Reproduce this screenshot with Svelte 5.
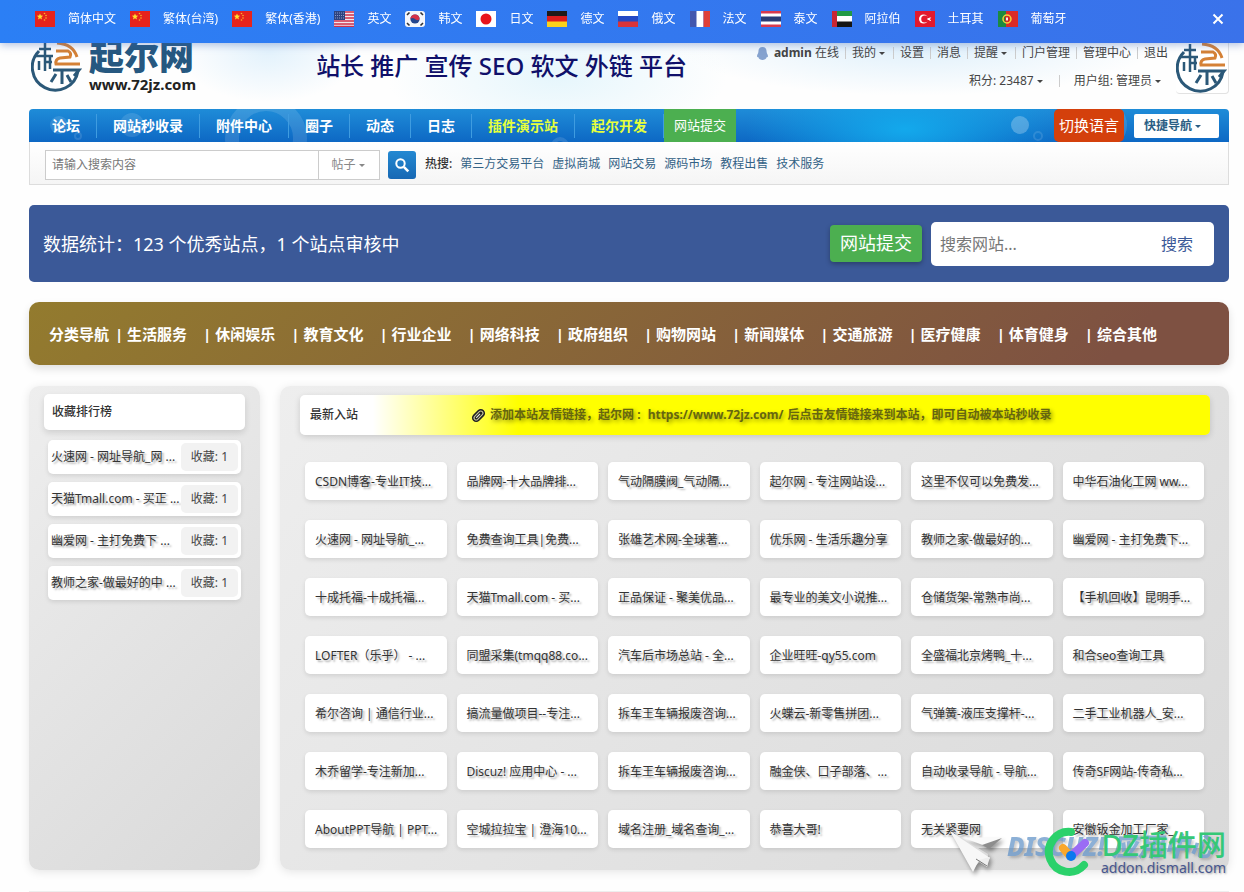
<script>
  const languages = [
    { code: 'cn', label: '简体中文' },
    { code: 'cn', label: '繁体(台湾)' },
    { code: 'cn', label: '繁体(香港)' },
    { code: 'us', label: '英文' },
    { code: 'kr', label: '韩文' },
    { code: 'jp', label: '日文' },
    { code: 'de', label: '德文' },
    { code: 'ru', label: '俄文' },
    { code: 'fr', label: '法文' },
    { code: 'th', label: '泰文' },
    { code: 'ae', label: '阿拉伯' },
    { code: 'tr', label: '土耳其' },
    { code: 'pt', label: '葡萄牙' }
  ];

  const userLinks = [
    { label: '我的', menu: true },
    { label: '设置' },
    { label: '消息' },
    { label: '提醒', menu: true },
    { label: '门户管理' },
    { label: '管理中心' },
    { label: '退出' }
  ];

  const navItems = [
    { label: '论坛' },
    { label: '网站秒收录' },
    { label: '附件中心' },
    { label: '圈子' },
    { label: '动态' },
    { label: '日志' },
    { label: '插件演示站', hot: true },
    { label: '起尔开发', hot: true }
  ];

  const hotWords = ['第三方交易平台', '虚拟商城', '网站交易', '源码市场', '教程出售', '技术服务'];

  const categories = [
    '生活服务', '休闲娱乐', '教育文化', '行业企业', '网络科技', '政府组织',
    '购物网站', '新闻媒体', '交通旅游', '医疗健康', '体育健身', '综合其他'
  ];

  const ranking = [
    { title: '火速网 - 网址导航_网 ...', count: 1 },
    { title: '天猫Tmall.com - 买正 ...', count: 1 },
    { title: '幽爱网 - 主打免费下 ...', count: 1 },
    { title: '教师之家-做最好的中 ...', count: 1 }
  ];

  const sites = [
    'CSDN博客-专业IT技...', '品牌网-十大品牌排...', '气动隔膜阀_气动隔...',
    '起尔网 - 专注网站设...', '这里不仅可以免费发...', '中华石油化工网 ww...',
    '火速网 - 网址导航_...', '免费查询工具|免费...', '张雄艺术网-全球著...',
    '优乐网 - 生活乐趣分享', '教师之家-做最好的...', '幽爱网 - 主打免费下...',
    '十成托福-十成托福...', '天猫Tmall.com - 买...', '正品保证 - 聚美优品...',
    '最专业的美文小说推...', '仓储货架-常熟市尚...', '【手机回收】昆明手...',
    'LOFTER（乐乎） - ...', '同盟采集(tmqq88.co...', '汽车后市场总站 - 全...',
    '企业旺旺-qy55.com', '全盛福北京烤鸭_十...', '和合seo查询工具',
    '希尔咨询 | 通信行业...', '搞流量做项目--专注...', '拆车王车辆报废咨询...',
    '火蝶云-新零售拼团...', '气弹簧-液压支撑杆-...', '二手工业机器人_安...',
    '木乔留学-专注新加...', 'Discuz! 应用中心 - ...', '拆车王车辆报废咨询...',
    '融金侠、口子部落、...', '自动收录导航 - 导航...', '传奇SF网站-传奇私...',
    'AboutPPT导航 | PPT...', '空城拉拉宝 | 澄海10...', '域名注册_域名查询_...',
    '恭喜大哥!', '无关紧要网', '安徽钣金加工厂家_'
  ];

  let showLanguages = $state(true);
  let keyword = $state('');
  let siteKeyword = $state('');
</script>

{#snippet flag(code)}
  <svg class="flag" viewBox="0 0 20 16" aria-hidden="true">
    {#if code === 'cn'}
      <rect width="20" height="16" fill="#e6231c" />
      <path d="M5 2.5l.9 2.1 2.2.2-1.7 1.4.6 2.2L5 7.2 3 8.400l.6-2.200L1.900 4.800l2.200-.2z" fill="#fde02f" />
      <g fill="#f9b52c">
        <circle cx="9.500" cy="2.500" r=".8" />
        <circle cx="11" cy="4.500" r=".8" />
        <circle cx="11" cy="7" r=".8" />
        <circle cx="9.500" cy="9" r=".8" />
      </g>
    {:else if code === 'us'}
      <rect width="20" height="16" fill="#f3e6ec" />
      <path d="M0 1h20M0 4h20M0 7h20M0 10h20M0 13h20M0 15.500h20" stroke="#d0304a" stroke-width="1.400" />
      <rect width="11" height="9" fill="#2d437f" />
      <path d="M1 2h9M1 4.500h9M1 7h9" stroke="#8d9cc6" stroke-dasharray="1 1" />
    {:else if code === 'kr'}
      <rect width="20" height="16" rx="3" fill="#f4f6fb" />
      <circle cx="10" cy="8" r="4.600" fill="#24478f" />
      <path d="M5.400 8a4.600 4.600 0 0 1 9.200 0c-2 2-3 1-4.600 0s-3-1.500-4.600 0z" fill="#d4314a" />
      <path d="M2 4l2.500-2.500M15.500 1.500L18 4M2 12l2.500 2.500M15.500 14.500L18 12" stroke="#333" stroke-width="1.600" />
    {:else if code === 'jp'}
      <rect width="20" height="16" fill="#fff" />
      <circle cx="10" cy="8" r="5.500" fill="#e8141c" />
    {:else if code === 'de'}
      <rect width="20" height="5.500" fill="#1d1a1a" />
      <rect y="5" width="20" height="6" fill="#dc1d1d" />
      <rect y="10.500" width="20" height="5.500" fill="#fbd21b" />
    {:else if code === 'ru'}
      <rect width="20" height="5.500" fill="#fff" />
      <rect y="5" width="20" height="6" fill="#2349c4" />
      <rect y="10.500" width="20" height="5.500" fill="#d8343a" />
    {:else if code === 'fr'}
      <rect width="7" height="16" fill="#4257ae" />
      <rect x="6.500" width="7" height="16" fill="#fff" />
      <rect x="13.500" width="6.500" height="16" fill="#df4038" />
    {:else if code === 'th'}
      <rect width="20" height="16" fill="#d83a4c" />
      <rect y="2.500" width="20" height="11" fill="#fff" />
      <rect y="5.500" width="20" height="5" fill="#293c74" />
    {:else if code === 'ae'}
      <rect width="20" height="5.500" fill="#229a45" />
      <rect y="5" width="20" height="6" fill="#fff" />
      <rect y="10.500" width="20" height="5.500" fill="#151515" />
      <rect width="5" height="16" fill="#c92634" />
    {:else if code === 'tr'}
      <rect width="20" height="16" fill="#e3192c" />
      <circle cx="8.500" cy="8" r="4.500" fill="#fff" />
      <circle cx="9.800" cy="8" r="3.600" fill="#e3192c" />
      <path d="M12.500 8l3-1.200-1.200 1.200 1.200 1.500z" fill="#fff" stroke="#fff" />
    {:else}
      <rect width="20" height="16" fill="#dc2b26" />
      <rect width="8" height="16" fill="#1c8a3f" />
      <circle cx="9" cy="8" r="4" fill="none" stroke="#f4d23a" stroke-width="1.500" />
      <rect x="7.500" y="6" width="3" height="4" fill="#f3ece8" stroke="#d4251f" />
    {/if}
  </svg>
{/snippet}

{#snippet emblem()}
  <svg class="emblem" viewBox="0 0 52 52" fill="none" stroke-width="3" aria-hidden="true">
    <g stroke="#2b5878">
      <path d="M8 11A23 23 0 1 0 47 31" />
      <path d="M8 9h12M5 16h17M14 3v28M19 16v13M14 22h7M8 21v9" stroke-width="2.500" />
      <path d="M22 30h26l-5 6M31 31v13M25 34l-5 8M36 35l4 7" />
    </g>
    <g stroke="#d58136">
      <path d="M26 3q16 1 20 14M25 11h12q4 2 2 6l-10 1q-5 1-4 6h24" />
    </g>
  </svg>
{/snippet}

{#if showLanguages}
  <div class="lang-bar">
    {#each languages as lang}
      <a class="lang" href="#lang">
        {@render flag(lang.code)}
        <span>{lang.label}</span>
      </a>
    {/each}
    <button class="close" aria-label="关闭" onclick={() => (showLanguages = false)}>
      <svg viewBox="0 0 12 12" aria-hidden="true">
        <path d="M1.500 1.500l9 9M10.500 1.500l-9 9" stroke="#fff" stroke-width="2" />
      </svg>
    </button>
  </div>
{/if}

<div class="page">
  <header class="header">
    <a class="logo" href="#home">
      {@render emblem()}
      <span class="logo-text">
        <b class="logo-name">起尔网</b>
        <b class="logo-url">www.72jz.com</b>
      </span>
    </a>
    <p class="slogan">站长 推广 宣传 SEO 软文 外链 平台</p>
    <div class="user">
      <div class="user-row">
        <svg class="bell" viewBox="0 0 12 14" aria-hidden="true">
          <path d="M6 0c3 0 4.500 2 4.500 5 0 2 1.500 3 1.500 5 0 1-1 1-1.500 1C10 13 8 14 6 14s-4-1-4.500-3C1 11 0 11 0 10c0-2 1.500-3 1.500-5C1.500 2 3 0 6 0z" fill="#86a3cf" />
        </svg>
        <span><b>admin</b> 在线</span>
        {#each userLinks as link}
          <i class="sep"></i>
          <a href="#user" class:menu={link.menu}>{link.label}</a>
        {/each}
      </div>
      <div class="user-row points">
        <a class="menu" href="#points">积分: 23487</a>
        <i class="sep"></i>
        <a class="menu" href="#group">用户组: 管理员</a>
      </div>
    </div>
    <a class="avatar" href="#me" aria-label="admin">{@render emblem()}</a>
  </header>

  <nav class="nav">
    <svg class="bubbles" viewBox="0 0 1200 33" preserveAspectRatio="xMidYMid slice" aria-hidden="true">
      <g fill="none" stroke="#fff" stroke-opacity=".12">
        <circle cx="237" cy="29" r="34" stroke-width="14" />
        <circle cx="49" cy="27" r="3" stroke-width="2" />
        <circle cx="1009" cy="27" r="4" stroke-width="2" />
        <circle cx="1074" cy="16" r="20" stroke-width="8" />
        <circle cx="531" cy="37" r="7" stroke-width="4" />
      </g>
      <g fill="#fff" fill-opacity=".12">
        <circle cx="30" cy="16" r="9" />
        <circle cx="103" cy="16" r="12" />
      </g>
      <circle cx="991" cy="16" r="9" fill="#fff" fill-opacity=".25" />
    </svg>
    {#each navItems as item}
      <a class="nav-item" class:hot={item.hot} href="#nav">{item.label}</a>
    {/each}
    <a class="nav-submit" href="#submit">网站提交</a>
    <button class="switch" onclick={() => (showLanguages = !showLanguages)}>切换语言</button>
    <button class="quick menu">快捷导航</button>
  </nav>

  <form class="search">
    <div class="search-box">
      <input type="text" aria-label="搜索" placeholder="请输入搜索内容" bind:value={keyword} />
      <button type="button" class="scope menu">帖子</button>
    </div>
    <button type="button" class="search-btn" aria-label="搜索">
      <svg viewBox="0 0 16 16" fill="none" stroke="#fff" aria-hidden="true">
        <circle cx="6.500" cy="6.500" r="4.200" stroke-width="2" />
        <path d="M9.800 9.800l4.500 4.500" stroke-width="2.600" />
      </svg>
    </button>
    <div class="hot-words">
      <strong>热搜:</strong>
      {#each hotWords as word}
        <a href="#hot">{word}</a>
      {/each}
    </div>
  </form>

  <section class="stats">
    <p>数据统计：123 个优秀站点，1 个站点审核中</p>
    <a class="submit" href="#submit">网站提交</a>
    <form class="site-search">
      <input type="text" aria-label="搜索网站" placeholder="搜索网站..." bind:value={siteKeyword} />
      <button type="button">搜索</button>
    </form>
  </section>

  <nav class="categories">
    <span>分类导航&nbsp;</span>
    {#each categories as category}
      <a href="#category">| {category}</a>
    {/each}
  </nav>

  <main class="columns">
    <aside class="panel rank">
      <h2>收藏排行榜</h2>
      <ul>
        {#each ranking as item}
          <li>
            <a href="#site">{item.title}</a>
            <span>收藏: {item.count}</span>
          </li>
        {/each}
      </ul>
    </aside>

    <section class="panel latest">
      <div class="latest-head">
        <h2>最新入站</h2>
        <p class="notice">
          <svg viewBox="0 0 14 14" fill="none" aria-hidden="true">
            <g transform="rotate(45 7 7)">
              <rect x="3" y="0" width="8" height="14" rx="4" fill="#222" />
              <rect x="5" y="2" width="4" height="10" rx="2" stroke="#c8c8a0" />
              <path d="M7 5v5" stroke="#eee" />
            </g>
          </svg>
          <span>添加本站友情链接，起尔网 :</span>
          <span>&nbsp;https://www.72jz.com/</span>
          <span>后点击友情链接来到本站，即可自动被本站秒收录</span>
        </p>
      </div>
      <div class="grid">
        {#each sites as site}
          <a href="#site">{site}</a>
        {/each}
      </div>
    </section>
  </main>
  <div class="foot-line"></div>

  <div class="watermark">
    <svg class="plane" viewBox="0 0 54 42" aria-hidden="true">
      <path d="M0 0l38 23-1 13-8-5-6 7z" fill="#dcdcdc" />
      <path d="M0 0l23 41 6-12 8 2 3-4z" fill="#f7f7f7" />
      <path d="M14 7l38 0-14 9z" fill="#fafafa" />
      <path d="M52 7L39 18l-7-4z" fill="#8d8d8d" />
      <path d="M29 29l11-3-3 10z" fill="#eee" />
      <path d="M26 28l11 7" stroke="#777" />
    </svg>
    <span class="wm-under">DISCUZ! 应用中心</span>
    <svg class="wm-mark" viewBox="0 0 48 52" fill="none" stroke-linecap="round" aria-hidden="true">
      <path d="M27 6A20 20 0 1 0 40 39" stroke="#2bd16b" stroke-width="8" />
      <path d="M19 22l7 8" stroke="#f9a72b" stroke-width="8" />
      <path d="M27 30L41 17" stroke="#9a6cf5" stroke-width="8" />
      <circle cx="27" cy="30" r="5" fill="#0a78ee" />
    </svg>
    <div class="wm-text">
      <b>DZ插件网</b>
      <span>addon.dismall.com</span>
    </div>
  </div>
</div>

<style>
  :global(body) {
    margin: 0;
    background: #fefefe;
    color: #444;
    font: 12px/18px "Noto Sans", "Noto Sans CJK SC", sans-serif;
  }

  a {
    color: inherit;
    text-decoration: none;
  }

  button,
  input {
    box-sizing: border-box;
    margin: 0;
    padding: 0;
    border: 0;
    background: none;
    color: inherit;
    font: inherit;
  }

  h2,
  p,
  ul {
    margin: 0;
    padding: 0;
    font-weight: normal;
  }

  .menu::after {
    content: "";
    display: inline-block;
    margin: 0 2px 0 3px;
    border: 3px solid transparent;
    border-top-color: currentColor;
    border-bottom: 0;
    vertical-align: middle;
  }

  /* language bar */
  .lang-bar {
    position: fixed;
    z-index: 10;
    top: 0;
    left: 0;
    right: 0;
    box-sizing: border-box;
    height: 43px;
    padding: 0 20px 6px 35px;
    display: flex;
    align-items: center;
    gap: 14px;
    background: linear-gradient(90deg, #2b7ff5, #3a72ea);
    box-shadow: 0 2px 8px rgba(60, 100, 180, 0.4);
    color: #fff;
  }

  .lang {
    display: flex;
    align-items: center;
    gap: 13px;
    white-space: nowrap;
  }

  .flag {
    width: 20px;
    height: 16px;
  }

  .close {
    margin-left: auto;
    width: 12px;
    height: 12px;
    display: flex;
    cursor: pointer;
  }

  /* page frame */
  .page {
    position: relative;
    padding: 0 15px 0 29px;
  }

  .header {
    box-sizing: border-box;
    height: 109px;
    padding-top: 40px;
    display: flex;
    align-items: flex-start;
    background:
      radial-gradient(ellipse 90px 50px at 20% 48%, #e3f2fc, transparent),
      radial-gradient(ellipse 170px 70px at 44% 70%, #e6f6fc, transparent),
      radial-gradient(ellipse 240px 50px at 74% 42%, #dff0fb, transparent);
  }

  .emblem {
    width: 52px;
    height: 52px;
  }

  .logo {
    display: flex;
    gap: 6px;
    padding-left: 2px;
  }

  .logo-text {
    display: flex;
    flex-direction: column;
  }

  .logo-name {
    color: #265880;
    font-size: 35px;
    font-weight: 900;
    line-height: 34px;
  }

  .logo-url {
    color: #222;
    font-size: 15px;
    line-height: 20px;
  }

  .slogan {
    margin-left: 120px;
    padding-top: 8px;
    color: #10106a;
    font-size: 24px;
    font-weight: 500;
    line-height: 36px;
    white-space: nowrap;
  }

  .user {
    margin-left: auto;
    padding-top: 4px;
    display: flex;
    flex-direction: column;
    align-items: flex-end;
    gap: 10px;
    white-space: nowrap;
  }

  .user-row {
    display: flex;
    align-items: center;
    gap: 6px;
  }

  .points {
    gap: 14px;
    padding-right: 5px;
  }

  .bell {
    width: 11px;
    height: 13px;
  }

  .sep {
    width: 1px;
    height: 12px;
    background: #ccc;
  }

  .avatar {
    display: flex;
    margin-left: 8px;
    border: 1px solid #e2e2e2;
    border-left: 0;
    border-radius: 4px;
    background: #fff;
  }

  /* main navigation */
  .nav {
    position: relative;
    height: 33px;
    padding: 0 10px 0 7px;
    display: flex;
    align-items: center;
    border-radius: 4px 4px 0 0;
    background:
      radial-gradient(ellipse 160px 60px at 73% 60%, #13a9ec, transparent),
      linear-gradient(#1f8cd8, #0d68c4);
    color: #fff;
    overflow: hidden;
    white-space: nowrap;
  }

  .bubbles {
    position: absolute;
    inset: 0;
    width: 100%;
    height: 100%;
  }

  .nav-item,
  .nav-submit,
  .switch,
  .quick {
    position: relative;
  }

  .nav-item {
    padding: 0 16px;
    border-right: 1px solid #3f9ce0;
    font-size: 14px;
    font-weight: bold;
    line-height: 24px;
  }

  .hot {
    color: #e6ff3c;
  }

  .nav-submit {
    padding: 0 10px;
    background: #4caf50;
    font-size: 13px;
    line-height: 33px;
  }

  .switch {
    margin-left: auto;
    padding: 0 5px;
    border-radius: 5px;
    background: #d4400c;
    font-size: 15px;
    line-height: 33px;
  }

  .quick {
    margin-left: 10px;
    width: 85px;
    height: 24px;
    padding-left: 10px;
    border-radius: 2px;
    background: #fff;
    color: #2a5d84;
    font-weight: bold;
    text-align: left;
  }

  /* forum search */
  .search {
    height: 38px;
    padding: 4px 15px 0;
    display: flex;
    align-items: center;
    border: 1px solid #ddd;
    border-top: 0;
    background: linear-gradient(#fff, #f5f5f5);
    white-space: nowrap;
  }

  .search-box {
    display: flex;
    width: 335px;
    height: 30px;
    box-sizing: border-box;
    border: 1px solid #ccc;
    background: #fff;
  }

  .search-box input {
    flex: 1;
    min-width: 0;
    padding-left: 6px;
  }

  input::placeholder {
    color: #777;
    opacity: 1;
  }

  .scope {
    width: 61px;
    border-left: 1px solid #ccc;
    color: #888;
  }

  .search-btn {
    margin-left: 8px;
    width: 28px;
    height: 28px;
    display: flex;
    align-items: center;
    justify-content: center;
    border-radius: 3px;
    background: linear-gradient(#2489d2, #1768b4);
  }

  .search-btn svg {
    width: 16px;
    height: 16px;
  }

  .hot-words {
    margin-left: 9px;
    padding-bottom: 3px;
    display: flex;
    gap: 8px;
    color: #336286;
  }

  .hot-words strong {
    color: #333;
    font-weight: 500;
  }

  /* statistics */
  .stats {
    margin-top: 20px;
    height: 77px;
    padding: 0 15px 0 14px;
    display: flex;
    align-items: center;
    border-radius: 5px;
    background: #3b5998;
    color: #fff;
    font-size: 18px;
    white-space: nowrap;
  }

  .submit {
    margin-left: auto;
    padding: 0 10px;
    border-radius: 4px;
    background: #4caf50;
    box-shadow: 0 2px 5px rgba(0, 0, 0, 0.3);
    line-height: 37px;
  }

  .site-search {
    margin-left: 9px;
    width: 283px;
    height: 44px;
    display: flex;
    border-radius: 5px;
    background: #fff;
    font-size: 16px;
  }

  .site-search input {
    flex: 1;
    min-width: 0;
    padding-left: 9px;
    color: #555;
  }

  .site-search button {
    padding: 0 21px;
    color: #3b5998;
  }

  /* categories */
  .categories {
    margin-top: 20px;
    height: 63px;
    padding-left: 20px;
    display: flex;
    align-items: center;
    border-radius: 10px;
    background: linear-gradient(135deg, #937b2e, #7e5142 90%);
    box-shadow: 0 4px 8px rgba(0, 0, 0, 0.12);
    color: #fff;
    font-size: 15px;
    font-weight: bold;
    white-space: nowrap;
  }

  .categories span {
    margin-right: 2px;
  }

  .categories a {
    margin-right: 16px;
  }

  /* columns */
  .columns {
    margin-top: 21px;
    display: flex;
    gap: 20px;
  }

  .panel {
    box-sizing: border-box;
    border-radius: 10px;
    background: linear-gradient(135deg, #eee, #d9d9d9);
    box-shadow: 0 2px 10px rgba(0, 0, 0, 0.1);
  }

  .rank {
    width: 231px;
    flex-shrink: 0;
    padding: 8px 15px;
  }

  .rank h2 {
    padding: 0 8px;
    border-radius: 5px;
    background: #fff;
    box-shadow: 0 3px 6px rgba(0, 0, 0, 0.12);
    color: #333;
    font-size: 12px;
    font-weight: 500;
    line-height: 36px;
  }

  .rank ul {
    margin: 10px 4px 0;
    display: flex;
    flex-direction: column;
    gap: 8px;
    list-style: none;
  }

  .rank li {
    height: 34px;
    padding: 0 3px;
    display: flex;
    align-items: center;
    justify-content: space-between;
    border-radius: 5px;
    background: #fff;
    box-shadow: 0 2px 4px rgba(0, 0, 0, 0.1);
    white-space: nowrap;
  }

  .rank li a,
  .grid a {
    color: #333;
    text-shadow: 2px 2px 2px rgba(0, 0, 0, 0.35);
  }

  .rank li span {
    padding: 0 10px;
    border-radius: 5px;
    background: #f2f2f2;
    line-height: 28px;
  }

  .latest {
    flex: 1;
    min-width: 0;
    padding: 9px 19px 22px 20px;
  }

  .latest-head {
    height: 40px;
    padding-left: 10px;
    display: flex;
    align-items: center;
    border-radius: 5px;
    background: linear-gradient(90deg, #fff 8%, #ff0 24%);
    box-shadow: 0 2px 6px rgba(0, 0, 0, 0.15);
    white-space: nowrap;
  }

  .latest-head h2 {
    color: #333;
    font-size: 12px;
    font-weight: 500;
  }

  .notice {
    margin-left: 113px;
    display: flex;
    align-items: center;
    gap: 4px;
    color: #66660f;
    font-weight: bold;
    text-shadow: 2px 2px 4px rgba(0, 0, 0, 0.4);
  }

  .notice svg {
    width: 15px;
    height: 15px;
  }

  .grid {
    margin: 27px 6px 0 5px;
    display: grid;
    grid-template-columns: repeat(6, minmax(0, 1fr));
    gap: 20px 10px;
  }

  .grid a {
    height: 38px;
    padding: 0 10px;
    border-radius: 5px;
    background: #fff;
    box-shadow: 0 2px 4px rgba(0, 0, 0, 0.1);
    line-height: 40px;
    overflow: hidden;
    white-space: nowrap;
  }

  .foot-line {
    margin-top: 21px;
    border-top: 1px solid #eee;
  }

  /* watermark */
  .watermark {
    position: absolute;
    right: 18px;
    bottom: 14px;
    display: flex;
    align-items: center;
    pointer-events: none;
  }

  .plane {
    width: 54px;
    height: 42px;
    filter: drop-shadow(2px 3px 2px rgba(0, 0, 0, 0.4));
  }

  .wm-under {
    position: absolute;
    left: 57px;
    top: 0;
    color: #5c8fc6;
    font-size: 26px;
    font-style: italic;
    font-weight: 800;
    line-height: 40px;
    opacity: 0.7;
    text-shadow: 2px 2px 3px rgba(0, 0, 0, 0.3);
    white-space: nowrap;
  }

  .wm-mark {
    position: relative;
    margin: 0 9px 0 40px;
    width: 48px;
    height: 52px;
  }

  .wm-text {
    position: relative;
    display: flex;
    flex-direction: column;
    align-items: flex-end;
    white-space: nowrap;
  }

  .wm-text b {
    color: #35c877;
    font-size: 29px;
    font-weight: 500;
    line-height: 32px;
  }

  .wm-text span {
    color: #47568f;
    font-size: 14px;
    line-height: 14px;
    text-shadow: 1px 1px 2px rgba(0, 0, 0, 0.3);
  }
</style>
